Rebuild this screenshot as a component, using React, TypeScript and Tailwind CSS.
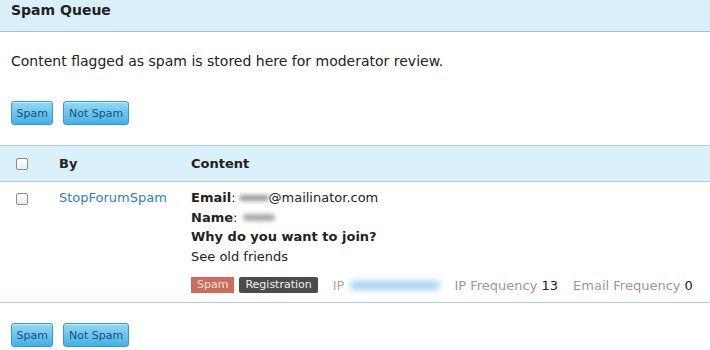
import React from "react";

const Btn = ({ label }: { label: string }) => (
  <button className="h-[24px] px-[4.5px] rounded-[3px] border border-[#3a9ad0] bg-gradient-to-b from-[#92d9f8] to-[#40b0e6] text-[11px] text-[#1d4f72] leading-none shadow-[inset_0_1px_0_rgba(255,255,255,0.5)]">
    {label}
  </button>
);

const Check = () => (
  <span className="block w-[12px] h-[12px] rounded-[2px] border border-[#8c8c8c] bg-gradient-to-b from-white to-[#eaeaea]" />
);

export default function App() {
  return (
    <div className="w-[710px] h-[350px] bg-white text-[13px] text-[#222] overflow-hidden" style={{ fontFamily: '"DejaVu Sans", Verdana, sans-serif' }}>
      <div className="h-[32px] bg-[#d9f0fb] border-b border-[#9cc3d3] px-[11px] pt-[1px] text-[14px] font-bold text-[#222] leading-[18px]">
        Spam Queue
      </div>

      <p className="px-[11px] pt-[19px] text-[14px] leading-[20px]">
        Content flagged as spam is stored here for moderator review.
      </p>

      <div className="flex gap-[10px] px-[11px] mt-[30px]">
        <Btn label="Spam" />
        <Btn label="Not Spam" />
      </div>

      <div className="mt-[20px] border-t border-[#aed2e2]">
        <div className="flex h-[36px] items-center bg-[#daf0fb] border-b border-[#a8cfe0] font-bold">
          <div className="w-[59px] pl-[16px]">
            <Check />
          </div>
          <div className="w-[132px]">By</div>
          <div>Content</div>
        </div>

        <div className="flex border-b border-[#a8cfe0] pt-[6px] h-[121px]">
          <div className="w-[59px] pl-[16px] pt-[5px]">
            <Check />
          </div>
          <div className="w-[132px] text-[#2f82ba]">StopForumSpam</div>
          <div className="flex-1 leading-[19.6px]">
            <div className="flex items-center">
              <span className="font-bold">Email</span>:
              <span className="inline-block w-[30px] h-[6px] ml-[3px] rounded-full bg-[#9a9a9a] blur-[2px]" />
              <span>@mailinator.com</span>
            </div>
            <div className="flex items-center">
              <span className="font-bold">Name</span>:
              <span className="inline-block w-[32px] h-[7px] ml-[6px] rounded-full bg-[#a8a8a8] blur-[2px]" />
            </div>
            <div className="font-bold">Why do you want to join?</div>
            <div>See old friends</div>
            <div className="flex items-center mt-[11px] text-[11px] h-[16px]">
              <span className="bg-[#cd6b5c] text-[#f6e4e0] px-[6px] leading-[16px]">Spam</span>
              <span className="bg-[#4b4b4b] text-[#f0f0f0] px-[6px] leading-[16px] ml-[5px] rounded-[2px]">Registration</span>
              <span className="text-[13px] text-[#aaa] ml-[15px]">IP</span>
              <span className="inline-block w-[90px] h-[9px] ml-[6px] rounded-full bg-[#a3d3f0] blur-[3px]" />
              <span className="text-[13px] text-[#999] ml-[14px]">
                IP Frequency <span className="text-[#222]">13</span>
              </span>
              <span className="text-[13px] text-[#999] ml-[15px]">
                Email Frequency <span className="text-[#222]">0</span>
              </span>
            </div>
          </div>
        </div>
      </div>

      <div className="flex gap-[10px] px-[11px] mt-[20px]">
        <Btn label="Spam" />
        <Btn label="Not Spam" />
      </div>
    </div>
  );
}
